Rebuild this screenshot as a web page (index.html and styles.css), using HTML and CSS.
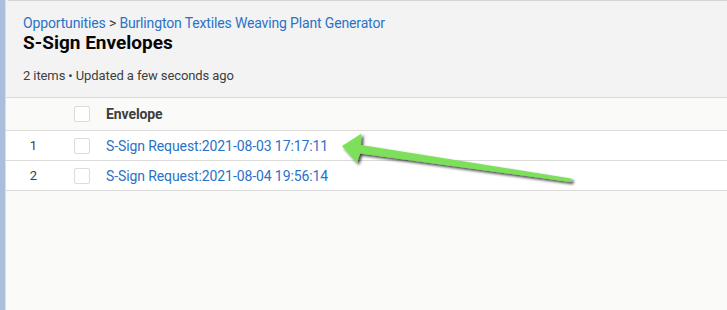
FILE: index.html
```html
<!DOCTYPE html>
<html>
<head>
<meta charset="utf-8">
<link rel="stylesheet" href="styles.css">
</head>
<body>
<div class="shell">
  <div class="strip"></div>
  <div class="card">
    <header class="head">
      <nav class="crumbs"><a>Opportunities</a> <span class="sep">&gt;</span> <a>Burlington Textiles Weaving Plant Generator</a></nav>
      <h1 class="title">S-Sign Envelopes</h1>
      <p class="meta">2 items • Updated a few seconds ago</p>
    </header>
    <div class="table">
      <div class="row hrow">
        <div class="c-num"></div>
        <div class="c-chk"><span class="box"></span></div>
        <div class="c-name">Envelope</div>
      </div>
      <div class="row drow">
        <div class="c-num">1</div>
        <div class="c-chk"><span class="box"></span></div>
        <div class="c-name"><a>S-Sign Request:2021-08-03 17:17:11</a></div>
      </div>
      <div class="row drow">
        <div class="c-num">2</div>
        <div class="c-chk"><span class="box"></span></div>
        <div class="c-name"><a>S-Sign Request:2021-08-04 19:56:14</a></div>
      </div>
    </div>
  </div>
</div>
<svg class="arrow" width="727" height="310" viewBox="0 0 727 310">
  <defs>
    <filter id="sh" x="-10%" y="-50%" width="120%" height="200%">
      <feGaussianBlur in="SourceAlpha" stdDeviation="1.6"/>
      <feOffset dx="2" dy="2" result="b"/>
      <feComponentTransfer><feFuncA type="linear" slope="0.75"/></feComponentTransfer>
      <feMerge><feMergeNode/><feMergeNode in="SourceGraphic"/></feMerge>
    </filter>
  </defs>
  <path filter="url(#sh)" fill="#7de05a" d="M342 146 L361.5 133.5 L361 145 L571 178.5 Q573 180.5 570.5 182 L360 153.5 L357 163 Z"/>
</svg>
</body>
</html>
```

FILE: styles.css
```css
html, body {
  margin: 0;
  padding: 0;
  width: 727px;
  height: 310px;
  overflow: hidden;
  background: #fafaf9;
  font-family: "Roboto", "Liberation Sans", sans-serif;
}
.shell {
  display: flex;
  height: 310px;
}
.strip {
  width: 5px;
  flex: none;
  background: #a9bfdc;
  border-right: 1px solid #d6dde8;
}
.card {
  flex: 1;
  display: flex;
  flex-direction: column;
  border-top: 1px solid #d4d4d4;
  border-top-left-radius: 4px;
  background: #fafaf9;
  overflow: hidden;
}
.head {
  background: #f3f3f3;
  border-bottom: 1px solid #dddbda;
  padding: 14px 17px 0;
  height: 82px;
}
.crumbs {
  font-size: 14px;
  letter-spacing: -0.15px;
  line-height: 17px;
  color: #2a72c8;
}
.crumbs .sep { color: #3e3e3c; }
.title {
  margin: 0;
  font-size: 19px;
  line-height: 22px;
  font-weight: 700;
  color: #080707;
}
.meta {
  margin: 13px 0 0;
  font-size: 13px;
  letter-spacing: -0.1px;
  line-height: 18px;
  color: #3e3e3c;
}
.table { display: flex; flex-direction: column; }
.row {
  display: flex;
  align-items: center;
  border-bottom: 1px solid #dddbda;
}
.hrow { height: 32px; background: #fafaf9; }
.drow { height: 29px; background: #fff; }
.c-num {
  width: 55px;
  text-align: center;
  font-size: 13px;
  color: #3e3e3c;
}
.c-chk { width: 45px; display: flex; padding-left: 13px; box-sizing: border-box; }
.box {
  width: 14px;
  height: 14px;
  border: 1px solid #dddbda;
  border-radius: 2px;
  background: #fff;
}
.c-name { font-size: 14px; color: #3e3e3c; letter-spacing: -0.1px; }
.hrow .c-name { font-weight: 700; font-size: 14px; }
.c-name a { color: #2a72c8; font-size: 14px; }
.arrow {
  position: absolute;
  left: 0;
  top: 0;
  pointer-events: none;
}
```
